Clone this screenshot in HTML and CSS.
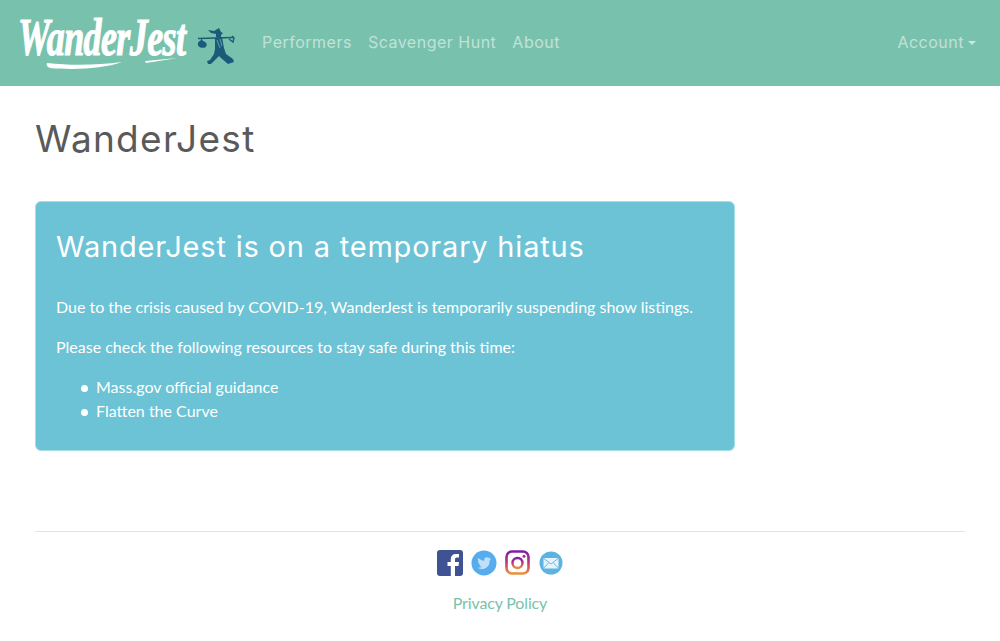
FILE: index.html

```html
<!DOCTYPE html>
<html lang="en">
<head>
  <meta charset="UTF-8" />
  <title>WanderJest</title>
  <link rel="stylesheet" href="styles.css">
</head>
<body>
  <nav class="navbar">
    <a class="brand" href="#">
      <span class="brand-word">
        <span class="brand-text">WanderJest</span>
        <svg class="brand-swash" viewBox="0 0 172 14" width="172" height="14">
          <path d="M29 6 C55 9 80 8 104 5 C85 12 55 13 32 11 C29 10 28 8 29 6 Z" fill="#fff"/>
          <path d="M127 4 L160 1 L128 6 Z" fill="#fff"/>
        </svg>
      </span>
      <svg class="brand-figure" viewBox="0 0 50 50" width="50" height="50">
        <path d="M18 8 L24 9 L29 6 L31 10 L33 11 L31 13 L31 16 L26 15 L26 12 L21 11 Z" fill="#1c5a7a"/>
        <path d="M8 16.5 L43 15.5" stroke="#1c5a7a" stroke-width="1.4" fill="none"/>
        <path d="M42 14 L44 16 L43 20 L39 17" stroke="#1c5a7a" stroke-width="1.4" fill="none"/>
        <path d="M11 16 L13 19 C17 20 18 24 15 25.5 C11 26.5 7 25 8 21 C8.5 19.5 10 19 11 18 Z" fill="#1c5a7a"/>
        <path d="M25 16 L32 15 L34 26 L36 32 L43 37 L44 40 L38 42 L31 36 L29 34 L25 38 L21 42 L18 42 L17 39 L20 38 L24 32 L25 27 Z" fill="#1c5a7a"/>
        <path d="M27 18 L30 26 M30 17 L32 24" stroke="#78c2ad" stroke-width="0.7" fill="none"/>
      </svg>
    </a>
    <a class="nav-link" href="#">Performers</a>
    <a class="nav-link" href="#">Scavenger Hunt</a>
    <a class="nav-link" href="#">About</a>
    <a class="nav-link account" href="#">Account<span class="caret"></span></a>
  </nav>

  <main class="container">
    <h1 class="page-title">WanderJest</h1>

    <section class="notice">
      <h2 class="notice-title">WanderJest is on a temporary hiatus</h2>
      <p>Due to the crisis caused by COVID-19, WanderJest is temporarily suspending show listings.</p>
      <p>Please check the following resources to stay safe during this time:</p>
      <ul>
        <li>Mass.gov official guidance</li>
        <li>Flatten the Curve</li>
      </ul>
    </section>

    <footer class="footer">
      <div class="social">
        <svg viewBox="0 0 26 26" width="26" height="26">
          <rect width="26" height="26" rx="3" fill="#3f5293"/>
          <path d="M18 26 V16 H21.5 L22 12 H18 V9.5 C18 8.2 18.5 7.5 20 7.5 H22 V4 H19 C15.5 4 13.8 6 13.8 9 V12 H10.5 V16 H13.8 V26 Z" fill="#fff"/>
        </svg>
        <svg viewBox="0 0 26 26" width="26" height="26">
          <circle cx="13" cy="13" r="12.5" fill="#55acee"/>
          <path d="M20 8.5 C19.4 8.8 18.9 8.9 18.3 9 C18.9 8.6 19.4 8 19.6 7.3 C19 7.7 18.4 7.9 17.7 8 C16.4 6.7 14 7.2 13.3 9 C13.1 9.6 13.1 10.2 13.2 10.7 C10.8 10.6 8.7 9.4 7.3 7.7 C6.5 9 6.9 10.8 8.2 11.6 C7.7 11.6 7.3 11.5 6.9 11.3 C6.9 12.8 7.9 14 9.3 14.3 C8.9 14.4 8.5 14.4 8.1 14.4 C8.5 15.6 9.6 16.4 10.9 16.5 C9.6 17.5 8 17.9 6.4 17.7 C11.6 20.9 19 17.9 18.6 10.4 C19.2 9.9 19.7 9.3 20 8.5 Z" fill="#bfe0f8"/>
        </svg>
        <svg viewBox="0 0 26 26" width="26" height="26">
          <defs>
            <linearGradient id="insta" x1="0" y1="0" x2="0" y2="1">
              <stop offset="0" stop-color="#7c1fa8"/>
              <stop offset="0.5" stop-color="#c4317e"/>
              <stop offset="1" stop-color="#e8923c"/>
            </linearGradient>
          </defs>
          <rect x="1.5" y="1.5" width="22" height="22" rx="5.5" fill="none" stroke="url(#insta)" stroke-width="2.6"/>
          <circle cx="12.5" cy="13" r="5" fill="none" stroke="url(#insta)" stroke-width="2.4"/>
          <circle cx="19" cy="6.2" r="1.5" fill="#a92a94"/>
        </svg>
        <svg viewBox="0 0 24 24" width="24" height="24">
          <circle cx="12" cy="12" r="11.5" fill="#5cb3e0"/>
          <rect x="4.5" y="7" width="15" height="10.5" rx="1" fill="#e6f3fb"/>
          <path d="M4.8 7.4 L12 13 L19.2 7.4 M4.8 17 L9.8 11.6 M19.2 17 L14.2 11.6" fill="none" stroke="#5cb3e0" stroke-width="0.9"/>
        </svg>
      </div>
      <a class="privacy" href="#">Privacy Policy</a>
    </footer>
  </main>
</body>
</html>
```

FILE: styles.css

```css
body {
  margin: 0;
  font-family: Lato, "Open Sans", Arial, sans-serif;
  font-size: 16px;
  line-height: 24px;
  color: #5a5a5a;
  background: #fff;
}

a {
  text-decoration: none;
}

.navbar {
  display: flex;
  align-items: center;
  height: 86px;
  padding: 0 16px 0 18px;
  background: #78c2ad;
}

.brand {
  display: flex;
  align-items: center;
  margin-right: 14px;
}

.brand-word {
  display: block;
  width: 172px;
  height: 60px;
}

.brand-text {
  display: block;
  font-family: "Liberation Serif", serif;
  font-size: 36px;
  line-height: 44px;
  font-weight: bold;
  font-style: italic;
  letter-spacing: -0.6px;
  white-space: nowrap;
  color: #fff;
  -webkit-text-stroke: 0.8px #fff;
  transform: translateY(3px) scaleY(1.45);
}

.brand-swash {
  display: block;
}

.brand-figure {
  margin-top: 8px;
}

.nav-link {
  margin-bottom: 2px;
  padding: 0 8px;
  font-family: Inter, Arial, sans-serif;
  font-size: 16px;
  letter-spacing: 0.5px;
  color: rgba(255, 255, 255, 0.55);
}

.account {
  margin-left: auto;
}

.caret {
  display: inline-block;
  margin-left: 4px;
  vertical-align: 3px;
  border-top: 4px solid rgba(255, 255, 255, 0.6);
  border-left: 4px solid transparent;
  border-right: 4px solid transparent;
}

.container {
  padding: 0 35px;
}

.page-title {
  margin: 29px 0 38px;
  font-family: Inter, Arial, sans-serif;
  font-size: 37px;
  line-height: 48px;
  font-weight: 400;
  letter-spacing: 1.3px;
  color: #5a5a5a;
}

.notice {
  box-sizing: border-box;
  width: 700px;
  height: 250px;
  padding: 20px;
  border: 1px solid #a9dde6;
  border-radius: 6px;
  background: #6cc3d5;
  color: #fff;
}

.notice-title {
  margin: 0 0 23px;
  font-family: Inter, Arial, sans-serif;
  font-size: 29px;
  line-height: 50px;
  font-weight: 400;
  letter-spacing: 0.8px;
}

.notice p {
  margin: 0 0 16px;
}

.notice ul {
  margin: 0;
  padding-left: 40px;
  list-style: none;
}

.notice li::before {
  content: "";
  display: inline-block;
  width: 7px;
  height: 7px;
  margin: 0 8px 1px -15px;
  border-radius: 50%;
  background: #fff;
}

.footer {
  margin-top: 80px;
  padding-top: 18px;
  border-top: 1px solid #e2e2e2;
  text-align: center;
}

.social {
  display: flex;
  justify-content: center;
  align-items: center;
  gap: 8px;
  height: 26px;
}

.privacy {
  display: block;
  margin-top: 15px;
  letter-spacing: -0.15px;
  color: #78c2ad;
}
```
